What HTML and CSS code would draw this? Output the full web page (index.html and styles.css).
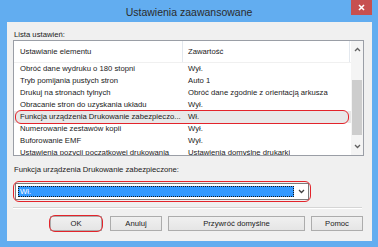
FILE: index.html
```html
<!DOCTYPE html>
<html>
<head>
    <title>Ustawienia zaawansowane</title>
    <link rel="stylesheet" href="styles.css">
</head>
<body>
    <div class="window">
        <div class="titlebar">
            <span class="title">Ustawienia zaawansowane</span>
            <span class="close">
                <svg width="7" height="7" viewBox="0 0 7 7"><path d="M1 1L6 6M6 1L1 6" stroke="#fff" stroke-width="1.6"/></svg>
            </span>
        </div>

        <div class="client">
            <div class="label">Lista ustawień:</div>

            <div class="list">
                <div class="list-body">
                    <div class="row head">
                        <span class="c1">Ustawianie elementu</span>
                        <span class="c2">Zawartość</span>
                    </div>
                    <div class="row"><span class="c1">Obróć dane wydruku o 180 stopni</span><span class="c2">Wył.</span></div>
                    <div class="row"><span class="c1">Tryb pomijania pustych stron</span><span class="c2">Auto 1</span></div>
                    <div class="row"><span class="c1">Drukuj na stronach tylnych</span><span class="c2">Obróć dane zgodnie z orientacją arkusza</span></div>
                    <div class="row"><span class="c1">Obracanie stron do uzyskania układu</span><span class="c2">Wył.</span></div>
                    <div class="row selected"><span class="c1">Funkcja urządzenia Drukowanie zabezpieczo...</span><span class="c2">Wł.</span></div>
                    <div class="row"><span class="c1">Numerowanie zestawów kopii</span><span class="c2">Wył.</span></div>
                    <div class="row"><span class="c1">Buforowanie EMF</span><span class="c2">Wył.</span></div>
                    <div class="row"><span class="c1">Ustawienia pozycji początkowej drukowania</span><span class="c2">Ustawienia domyślne drukarki</span></div>
                </div>
                <div class="scrollbar">
                    <span class="arrow">
                        <svg width="7" height="5" viewBox="0 0 7 5"><path d="M1 4L3.5 1.5L6 4" fill="none" stroke="#606060" stroke-width="1.3"/></svg>
                    </span>
                    <span class="track"><span class="thumb"></span></span>
                    <span class="arrow">
                        <svg width="7" height="5" viewBox="0 0 7 5"><path d="M1 1L3.5 3.5L6 1" fill="none" stroke="#606060" stroke-width="1.3"/></svg>
                    </span>
                </div>
            </div>

            <div class="label second">Funkcja urządzenia Drukowanie zabezpieczone:</div>

            <div class="select marked">
                <span class="value">Wł.</span>
                <span class="drop">
                    <svg width="7" height="5" viewBox="0 0 7 5"><path d="M1 1L3.5 3.5L6 1" fill="none" stroke="#404040" stroke-width="1.3"/></svg>
                </span>
            </div>

            <div class="separator"></div>

            <div class="buttons">
                <button class="btn ok marked">OK</button>
                <button class="btn">Anuluj</button>
                <button class="btn wide">Przywróć domyślne</button>
                <button class="btn">Pomoc</button>
            </div>
        </div>
    </div>
</body>
</html>
```

FILE: styles.css
```css
body {
    margin: 0;
    background: #62adf0;
    font-family: "Liberation Sans", Arial, sans-serif;
    font-size: 7.7px;
    color: #1a1a1a;
}
.window {
    width: 378px;
    height: 247px;
    overflow: hidden;
}
.titlebar {
    position: relative;
    height: 22px;
    display: flex;
    align-items: center;
    justify-content: center;
}
.title {
    font-size: 10.5px;
    color: #2b2b2b;
    margin-top: 1px;
}
.close {
    position: absolute;
    top: 0;
    right: 6px;
    width: 21px;
    height: 15px;
    background: #c75050;
    display: flex;
    align-items: center;
    justify-content: center;
}
.client {
    margin: 0 6px 0 7px;
    height: 219px;
    padding: 7px 8px 0 6px;
    box-sizing: border-box;
    background: #f0f0f0;
    display: flex;
    flex-direction: column;
}
.label {
    height: 11px;
    line-height: 11px;
    padding-left: 1px;
}
.label.second {
    margin-top: 8px;
    margin-bottom: 8px;
}
.list {
    height: 116px;
    flex-shrink: 0;
    border: 1px solid #9a9ea6;
    box-sizing: border-box;
    display: flex;
    background: #fff;
}
.list-body {
    flex: 1;
    overflow: hidden;
}
.row {
    position: relative;
    display: flex;
    height: 12px;
    line-height: 12px;
    white-space: nowrap;
}
.row .c1 {
    width: 169px;
    padding-left: 6px;
    box-sizing: border-box;
    overflow: hidden;
}
.row .c2 {
    padding-left: 5px;
    overflow: hidden;
}
.row.head {
    height: 22px;
    line-height: 21px;
    border-bottom: 1px solid #f0f0f0;
    box-sizing: border-box;
}
.row.head .c1 {
    border-right: 1px solid #e3e8ee;
}
.row.head .c2 {
    flex: 1;
    border-right: 1px solid #e3e8ee;
    margin-right: 1px;
}
.row.selected {
    background: #e8e8e8;
}
.row.selected::after {
    content: "";
    position: absolute;
    left: 1px;
    right: 2px;
    top: -1px;
    bottom: -1px;
    border: 1.5px solid #e3242b;
    border-radius: 6px;
}
.scrollbar {
    width: 12px;
    display: flex;
    flex-direction: column;
    background: #f4f4f4;
}
.arrow {
    height: 17px;
    display: flex;
    align-items: center;
    justify-content: center;
}
.track {
    flex: 1;
    padding-top: 22px;
}
.thumb {
    display: block;
    height: 55px;
    margin: 0 1px;
    background: #cdcdcd;
}
.select {
    position: relative;
    height: 17px;
    width: 294px;
    margin-left: 2px;
    border: 1px solid #7a7a7a;
    box-sizing: border-box;
    background: #fff;
    display: flex;
    align-items: center;
    padding-left: 2px;
}
.select .value {
    flex: 1;
    height: 11px;
    line-height: 11px;
    background: #3399ff;
    color: #fff;
    padding-left: 2px;
    outline: 1px dotted #1a1a1a;
    outline-offset: -1px;
}
.select .drop {
    width: 14px;
    display: flex;
    justify-content: center;
}
.marked::after {
    content: "";
    position: absolute;
    left: -3px;
    right: -3px;
    top: -3px;
    bottom: -3px;
    border: 1.5px solid #e3242b;
    border-radius: 6px;
}
.separator {
    margin: 7px 2px 0 0;
    height: 1px;
    background: #d5d5d5;
    border-bottom: 1px solid #fff;
}
.buttons {
    display: flex;
    justify-content: flex-end;
    gap: 6px;
    margin-top: 7px;
    margin-right: 1px;
}
.btn {
    position: relative;
    width: 52px;
    height: 15px;
    padding: 0;
    font-family: inherit;
    font-size: 7.7px;
    color: #1a1a1a;
    border: 1px solid #acacac;
    background: linear-gradient(#f0f0f0, #e5e5e5);
}
.btn.wide {
    width: 137px;
}
.btn.ok {
    margin-right: 2px;
}
.btn.ok::after {
    left: -2px;
    right: -2px;
    top: -2px;
    bottom: -2px;
}
```
